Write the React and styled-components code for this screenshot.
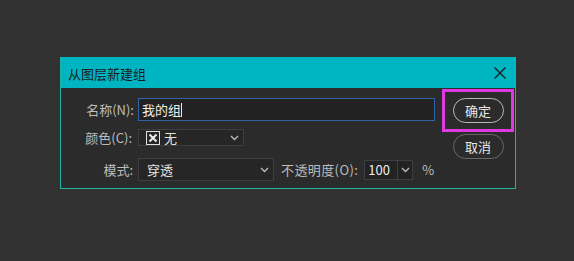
import React from "react";
import styled, { createGlobalStyle } from "styled-components";

const Global = createGlobalStyle`
  html, body {
    margin: 0;
    padding: 0;
    background: #323232;
    font-family: "Noto Sans CJK SC", "Noto Sans", sans-serif;
  }
`;

const Page = styled.div`
  width: 574px;
  height: 261px;
  padding: 57px 0 0 60px;
  box-sizing: border-box;
`;

const Dialog = styled.div`
  width: 456px;
  height: 132px;
  box-sizing: border-box;
  border: 1px solid #1fb2a6;
  border-top-color: #00b5c2;
  background: #2b2b2b;
  display: flex;
  flex-direction: column;
`;

const TitleBar = styled.div`
  height: 30px;
  background: #00b5c2;
  display: flex;
  align-items: center;
  justify-content: space-between;
  padding: 0 8px 0 7px;
  color: #1b1b1b;
  font-size: 13px;
`;

const Body = styled.div`
  flex: 1;
  display: flex;
`;

const Form = styled.div`
  width: 381px;
  padding-top: 10px;
  display: flex;
  flex-direction: column;
`;

const Row = styled.div`
  display: flex;
  align-items: center;
  gap: 4px;
  margin-top: ${({ $top }) => $top || 0}px;
`;

const Label = styled.span`
  width: 73px;
  text-align: right;
  color: #bdbdbd;
  font-size: 13px;
  line-height: 16px;
  white-space: nowrap;
  padding-right: ${({ $pad }) => $pad || 0}px;
  box-sizing: border-box;
`;

const TextField = styled.div`
  width: 297px;
  height: 23px;
  box-sizing: border-box;
  border: 1px solid #2f62a6;
  background: #222222;
  color: #ededed;
  font-size: 13px;
  display: flex;
  align-items: center;
  padding-left: 3px;
`;

const Caret = styled.span`
  display: inline-block;
  width: 1px;
  height: 14px;
  background: #e8e8e8;
`;

const Select = styled.div`
  width: ${({ $w }) => $w}px;
  height: ${({ $h }) => $h}px;
  box-sizing: border-box;
  border: 1px solid #3e3e3e;
  background: #262626;
  color: #e4e4e4;
  font-size: 13px;
  display: flex;
  align-items: center;
  padding: 0 4px 0 ${({ $pl }) => $pl}px;
  gap: 4px;
`;

const SelectText = styled.span`
  flex: 1;
  line-height: 16px;
`;

const Swatch = styled.span`
  width: 14px;
  height: 14px;
  box-sizing: border-box;
  border: 1px solid #e0e0e0;
  display: flex;
  align-items: center;
  justify-content: center;
`;

const Opacity = styled.span`
  color: #bdbdbd;
  font-size: 13px;
  margin-left: 3px;
  white-space: nowrap;
  letter-spacing: 0.4px;
`;

const NumberBox = styled.div`
  width: 49px;
  height: 20px;
  box-sizing: border-box;
  border: 1px solid #3e3e3e;
  background: #222222;
  display: flex;
  margin-left: 2px;
`;

const NumberValue = styled.span`
  width: 33px;
  border-right: 1px solid #3e3e3e;
  color: #ededed;
  font-size: 13px;
  line-height: 18px;
  padding-left: 3px;
  box-sizing: border-box;
`;

const NumberArrow = styled.span`
  flex: 1;
  display: flex;
  align-items: center;
  justify-content: center;
`;

const Percent = styled.span`
  color: #bdbdbd;
  font-size: 13px;
  margin-left: 5px;
`;

const Buttons = styled.div`
  width: 72px;
  display: flex;
  flex-direction: column;
  align-items: center;
  padding-top: 1px;
`;

const Highlight = styled.div`
  width: 72px;
  height: 43px;
  box-sizing: border-box;
  border: 3px solid #df3adf;
  display: flex;
  align-items: center;
  justify-content: center;
`;

const Button = styled.button`
  width: 51px;
  height: 25px;
  box-sizing: border-box;
  border-radius: 13px;
  border: 1.5px solid ${({ $primary }) => ($primary ? "#b8b8b8" : "#686868")};
  background: #2b2b2b;
  color: #e6e6e6;
  font-family: inherit;
  font-size: 13px;
  padding: 0;
  margin-top: ${({ $top }) => $top || 0}px;
`;

const Chevron = () => (
  <svg width="9" height="6" viewBox="0 0 9 6">
    <path d="M1 1 L4.5 4.5 L8 1" stroke="#bdbdbd" strokeWidth="1.3" fill="none" />
  </svg>
);

export default function App() {
  return (
    <>
      <Global />
      <Page>
        <Dialog>
          <TitleBar>
            <span>从图层新建组</span>
            <svg width="14" height="14" viewBox="0 0 14 14">
              <path d="M1.5 1.5 L12.5 12.5 M12.5 1.5 L1.5 12.5" stroke="#1b1b1b" strokeWidth="1.3" />
            </svg>
          </TitleBar>
          <Body>
            <Form>
              <Row>
                <Label>名称(N):</Label>
                <TextField>
                  我的组<Caret />
                </TextField>
              </Row>
              <Row $top={8}>
                <Label $pad={2}>颜色(C):</Label>
                <Select $w={106} $h={17} $pl={7}>
                  <Swatch>
                    <svg width="10" height="10" viewBox="0 0 10 10">
                      <path d="M1.5 1.5 L8.5 8.5 M8.5 1.5 L1.5 8.5" stroke="#f0f0f0" strokeWidth="2" />
                    </svg>
                  </Swatch>
                  <SelectText>无</SelectText>
                  <Chevron />
                </Select>
              </Row>
              <Row $top={12}>
                <Label $pad={1}>模式:</Label>
                <Select $w={136} $h={23} $pl={8}>
                  <SelectText>穿透</SelectText>
                  <Chevron />
                </Select>
                <Opacity>不透明度(O):</Opacity>
                <NumberBox>
                  <NumberValue>100</NumberValue>
                  <NumberArrow>
                    <Chevron />
                  </NumberArrow>
                </NumberBox>
                <Percent>%</Percent>
              </Row>
            </Form>
            <Buttons>
              <Highlight>
                <Button $primary>确定</Button>
              </Highlight>
              <Button $top={2}>取消</Button>
            </Buttons>
          </Body>
        </Dialog>
      </Page>
    </>
  );
}
